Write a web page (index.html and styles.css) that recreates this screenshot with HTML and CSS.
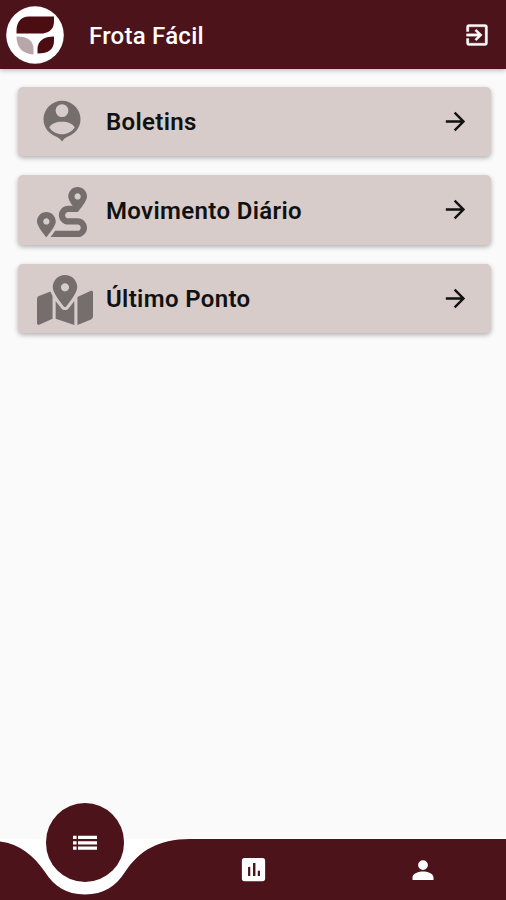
FILE: index.html
```html
<!DOCTYPE html>
<html lang="pt-BR">
<head>
<meta charset="utf-8">
<title>Frota Fácil</title>
<link rel="stylesheet" href="styles.css">
</head>
<body>
<header class="appbar">
  <svg class="logo" viewBox="0 0 60 60"><circle cx="30" cy="30" r="28.8" fill="#fff"/><path fill="#4c0d12" d="M24 11.500H49V16C49 23 46 27 38 28.500H11.500V26C11.500 17 16 11.500 24 11.500ZM49 31.500V36C49 44 44 48.500 32.500 48.500V44C32.500 36 39 31.500 49 31.500Z"/><path fill="#b9a6aa" d="M11.500 31.500C21 31 28.500 35 28.500 44V49.500C18 49 11.500 43 11.500 31.500Z"/></svg>
  <h1 class="title">Frota Fácil</h1>
  <svg class="exit" viewBox="0 0 24 24"><path d="M10.090 15.590 11.500 17l5-5-5-5-1.410 1.410L12.670 11H3v2h9.670l-2.580 2.590zM19 3H5a2 2 0 0 0-2 2v4h2V5h14v14H5v-4H3v4a2 2 0 0 0 2 2h14a2 2 0 0 0 2-2V5a2 2 0 0 0-2-2z"/></svg>
</header>
<main class="list">
  <a class="card">
    <span class="icon"><svg class="pin" viewBox="0 0 38 42"><path fill-rule="evenodd" d="M19 .8A18.500 18.500 0 0 0 .5 19.300C.5 28 6.500 34.500 14 37Q17 38 19 41.500Q21 38 24 37C31.500 34.500 37.500 28 37.500 19.300A18.500 18.500 0 0 0 19 .8ZM19 4.200A6.400 6.400 0 1 1 19 17A6.400 6.400 0 1 1 19 4.200ZM6.300 27.500C9.500 19.800 28.500 19.800 31.700 27.500C26 36.500 12 36.500 6.300 27.500Z"/></svg></span>
    <span class="label">Boletins</span>
    <svg class="arrow" viewBox="0 0 24 24"><path d="m12 4-1.410 1.410L16.170 11H4v2h12.170l-5.580 5.590L12 20l8-8z"/></svg>
  </a>
  <a class="card">
    <span class="icon"><svg class="route" viewBox="0 0 512 512"><path d="M416 320h-96c-17.600 0-32-14.400-32-32s14.400-32 32-32h96s96-107 96-160-43-96-96-96-96 43-96 96c0 25.500 22.200 63.400 45.300 96H320c-52.900 0-96 43.100-96 96s43.100 96 96 96h96c17.600 0 32 14.400 32 32s-14.400 32-32 32H185.500c-16 24.800-33.800 47.700-47.300 64H416c52.900 0 96-43.100 96-96s-43.100-96-96-96zm0-256c17.700 0 32 14.300 32 32s-14.300 32-32 32-32-14.300-32-32 14.300-32 32-32zM96 256c-53 0-96 43-96 96s96 160 96 160 96-107 96-160-43-96-96-96zm0 128c-17.700 0-32-14.300-32-32s14.300-32 32-32 32 14.300 32 32-14.300 32-32 32z"/></svg></span>
    <span class="label">Movimento Diário</span>
    <svg class="arrow" viewBox="0 0 24 24"><path d="m12 4-1.410 1.410L16.170 11H4v2h12.170l-5.580 5.590L12 20l8-8z"/></svg>
  </a>
  <a class="card">
    <span class="icon"><svg class="map" viewBox="0 0 576 512"><path d="M288 0c-69.590 0-126 56.410-126 126 0 56.260 82.350 158.800 113.900 196.020 6.390 7.540 17.820 7.540 24.200 0C331.650 284.800 414 182.260 414 126 414 56.410 357.590 0 288 0zm0 168c-23.200 0-42-18.800-42-42s18.800-42 42-42 42 18.800 42 42-18.800 42-42 42zM20.120 215.950A32.006 32.006 0 0 0 0 245.660v250.320c0 11.320 11.430 19.060 21.940 14.860L160 448V214.920c-8.840-15.980-16.070-31.540-21.250-46.420L20.120 215.950zM288 359.670c-14.070 0-27.380-6.180-36.510-16.960-19.660-23.200-40.570-49.620-59.490-76.720v182l192 64V266c-18.920 27.090-39.820 53.520-59.490 76.720-9.130 10.770-22.440 16.950-36.510 16.950zm266.060-198.510L416 224v288l139.880-55.950A31.996 31.996 0 0 0 576 426.340V176.020c0-11.320-11.430-19.060-21.940-14.860z"/></svg></span>
    <span class="label">Último Ponto</span>
    <svg class="arrow" viewBox="0 0 24 24"><path d="m12 4-1.410 1.410L16.170 11H4v2h12.170l-5.580 5.590L12 20l8-8z"/></svg>
  </a>
</main>
<nav class="nav">
  <svg class="wave" viewBox="0 0 506 61"><path fill="#fff" d="M0 0H190V61H0Z"/><path fill="#4c131a" d="M0 2.500C20 5 34 17 45 33C54 47 66 55.500 85 55.500S116 47 125 33C139 12 158 0 190 0H506V61H0Z"/></svg>
  <div class="tab"><span class="bubble"><svg viewBox="0 0 24 16"><path d="M0 .8h3.600v3.200H0zM0 6.200h3.600v3.200H0zM0 11.600h3.600v3.200H0zM5 .8H24v3.200H5zM5 6.200H24v3.200H5zM5 11.600H24v3.200H5z"/></svg></span></div>
  <div class="tab"><svg class="chart" viewBox="0 0 24 24"><path d="M19 3H5a2 2 0 0 0-2 2v14a2 2 0 0 0 2 2h14a2 2 0 0 0 2-2V5a2 2 0 0 0-2-2zM9.500 17h-1.700v-7h1.700v7zm4 0h-1.900V7h1.900v10zm3.500 0h-1.700v-4h1.700v4z"/></svg></div>
  <div class="tab"><svg class="person" viewBox="0 0 24 24"><path d="M12 12a4.200 4.200 0 1 0 0-8.400 4.200 4.200 0 0 0 0 8.400zm0 1.200c-3.500 0-9 1.500-9 5.200V20.500h18v-2.100c0-3.700-5.500-5.200-9-5.200z"/></svg></div>
</nav>
</body>
</html>
```
FILE: styles.css
```css
* { box-sizing: border-box; }
body {
  margin: 0;
  height: 900px;
  display: flex;
  flex-direction: column;
  background: #fafafa;
  font-family: Roboto, "Liberation Sans", sans-serif;
  overflow: hidden;
}
svg { display: block; flex: none; }
.appbar {
  height: 69px;
  flex: none;
  display: flex;
  align-items: center;
  padding: 0 15px 0 5px;
  background: #4c131a;
  box-shadow: 0 1px 5px rgba(0, 0, 0, .3);
}
.logo { width: 60px; height: 60px; }
.title {
  flex: 1;
  margin: 3px 0 0 24px;
  font-size: 24px;
  line-height: 28px;
  font-weight: 500;
  letter-spacing: .25px;
  color: #fff;
}
.exit {
  width: 28px;
  height: 28px;
  margin-top: 1px;
  fill: #fff;
  stroke: #fff;
  stroke-width: .3px;
}
.list {
  flex: 1;
  display: flex;
  flex-direction: column;
  gap: 19px;
  padding: 17.500px 15px 0 18px;
}
.card {
  height: 69.600px;
  display: flex;
  align-items: center;
  padding-right: 21.500px;
  border-radius: 5px;
  background: #d7ccc9;
  box-shadow: 0 2px 5px rgba(0, 0, 0, .3);
}
.icon {
  width: 88px;
  padding-left: 19px;
  flex: none;
  fill: #756e6c;
}
.pin { width: 38px; height: 42px; margin: -1px 0 0 6px; }
.route { width: 50px; height: 50px; margin-top: 5px; }
.map { width: 56px; height: 50px; margin-top: 4px; }
.label {
  flex: 1;
  margin-top: 2px;
  font-size: 24px;
  line-height: 28px;
  font-weight: 600;
  letter-spacing: .35px;
  color: #111;
}
.arrow { width: 29px; height: 29px; fill: #111; }
.nav {
  height: 61px;
  flex: none;
  position: relative;
  display: grid;
  grid-template-columns: repeat(3, 1fr);
}
.wave { position: absolute; inset: 0; width: 506px; height: 61px; }
.tab {
  position: relative;
  display: flex;
  align-items: center;
  justify-content: center;
  fill: #fff;
}
.bubble {
  position: absolute;
  top: -36px;
  left: 45.500px;
  width: 78.500px;
  height: 78.500px;
  display: flex;
  align-items: center;
  justify-content: center;
  border-radius: 50%;
  background: #4c131a;
}
.bubble svg { width: 24px; height: 16px; margin-top: 1px; }
.chart { width: 31px; height: 31px; margin-left: 1px; }
.person { width: 28px; height: 28px; margin-left: 2px; }
```
